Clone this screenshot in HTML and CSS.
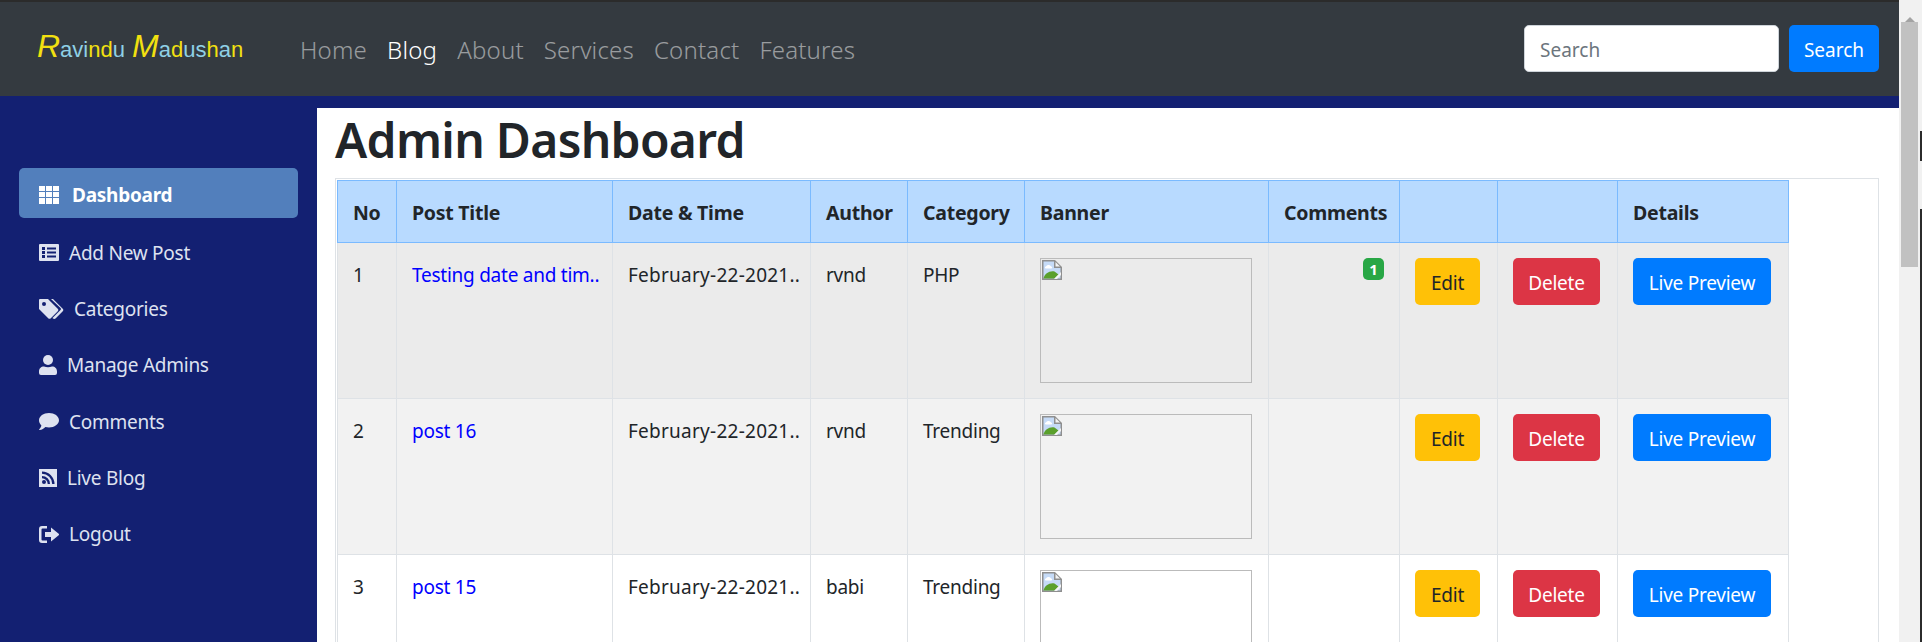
FILE: index.html
```html
<!DOCTYPE html>
<html lang="en">
<head>
    <meta charset="UTF-8">
    <meta name="viewport" content="width=device-width, initial-scale=1.0">
    <title>Admin Dashboard</title>
    <link rel="stylesheet" href="styles.css">
</head>
<body>
<svg class="defs" width="0" height="0">
    <symbol id="ico-broken" viewBox="0 0 20 20">
        <path d="M0 0h13l7 7v13H0z" fill="#8f8f8f"/>
        <path d="M1.500 1.500h10.500v6.500h6.500v10.500H1.500z" fill="#c6dbf7"/>
        <path d="M13.500 2 18 6.500h-4.500z" fill="#f4f4f4"/>
        <path d="M4 6.500c1-2 4-2 5 0 1.500 0 1.500 2 0 2H4c-1.500 0-1.500-2 0-2z" fill="#fff"/>
        <path d="M1.500 18.500c1-5 6-8 11-7l4 3-4 4z" fill="#5aa02c"/>
        <path d="M12 19l7-7v3l-4 4z" fill="#f4f4f4"/>
    </symbol>
</svg>
<div id="window">
    <div id="page">
        <div id="topbar">
            <a class="logo" href="#"><span class="y cap">R</span><span class="b">avi</span><span class="y">nd</span><span class="b">u</span> <span class="y cap">M</span><span class="b">a</span><span class="y">d</span><span class="b">us</span><span class="y">h</span><span class="b">a</span><span class="y">n</span></a>
            <nav class="menu">
                <a href="#">Home</a>
                <a href="#" class="on">Blog</a>
                <a href="#">About</a>
                <a href="#">Services</a>
                <a href="#">Contact</a>
                <a href="#">Features</a>
            </nav>
            <form class="search">
                <input type="text" placeholder="Search">
                <button type="button" class="btn blue">Search</button>
            </form>
        </div>
        <div id="body">
            <div id="side">
                <a href="#" class="side-link active">
                    <svg class="ico" width="20" height="18" viewBox="0 0 20 18"><path d="M0 0h6v5H0zM7 0h6v5H7zM14 0h6v5h-6zM0 6h6v5H0zM7 6h6v5H7zM14 6h6v5h-6zM0 12h6v6H0zM7 12h6v6H7zM14 12h6v6h-6z"/></svg>
                    Dashboard
                </a>
                <a href="#" class="side-link">
                    <svg class="ico" width="20" height="17" viewBox="0 0 20 17"><path fill-rule="evenodd" d="M1 0h18a1 1 0 0 1 1 1v15a1 1 0 0 1-1 1H1a1 1 0 0 1-1-1V1a1 1 0 0 1 1-1zM3 3v3h3V3zM8 3.500v2h9v-2zM3 7v3h3V7zM8 7.500v2h9v-2zM3 11v3h3v-3zM8 11.500v2h9v-2z"/></svg>
                    Add New Post
                </a>
                <a href="#" class="side-link">
                    <svg class="ico" width="25" height="20" viewBox="0 0 25 20"><path fill-rule="evenodd" d="M1 0h8l10 10a2 2 0 0 1 0 2l-7 7a2 2 0 0 1-3 0L0 10V1a1 1 0 0 1 1-1zM5 3a2 2 0 1 0 0 4 2 2 0 0 0 0-4z"/><path d="M12 0h2l10 10a2 2 0 0 1 0 2l-7.500 7.500a2 2 0 0 1-2.500 0l-.5-.5 8-8a1.500 1.500 0 0 0 0-2z"/></svg>
                    Categories
                </a>
                <a href="#" class="side-link">
                    <svg class="ico" width="18" height="20" viewBox="0 0 18 20"><circle cx="9" cy="5" r="5"/><path d="M5 11.500c2.500 1 5.500 1 8 0 3 0 5 2 5 5V18a2 2 0 0 1-2 2H2a2 2 0 0 1-2-2v-1.500c0-3 2-5 5-5z"/></svg>
                    Manage Admins
                </a>
                <a href="#" class="side-link">
                    <svg class="ico" width="20" height="17" viewBox="0 0 20 17"><path d="M10 0c5.500 0 10 3.200 10 7.200s-4.500 7.200-10 7.200c-1.300 0-2.500-.2-3.600-.5C5 15.200 3 17 .5 17c-.5 0-.6-.5-.3-.8 1-1 2-2.300 2.200-3.800C.9 11 0 9.200 0 7.200 0 3.200 4.500 0 10 0z"/></svg>
                    Comments
                </a>
                <a href="#" class="side-link">
                    <svg class="ico" width="18" height="18" viewBox="0 0 18 18"><path fill-rule="evenodd" d="M0 0h18v18H0zM3 2.500v2.300A10.200 10.200 0 0 1 13.200 15h2.300A12.500 12.500 0 0 0 3 2.500zM3 7v2.300A5.700 5.700 0 0 1 8.700 15H11a8 8 0 0 0-8-8zM5 11a2 2 0 1 0 0 4 2 2 0 0 0 0-4z"/></svg>
                    Live Blog
                </a>
                <a href="#" class="side-link">
                    <svg class="ico" width="20" height="17" viewBox="0 0 20 17"><path d="M3 0h5v2.500H3.500a1 1 0 0 0-1 1v10a1 1 0 0 0 1 1H8V17H3a3 3 0 0 1-3-3V3a3 3 0 0 1 3-3z"/><path d="M12 1.500l7.700 6.300a1 1 0 0 1 0 1.400L12 15.500V11H6V6h6z"/></svg>
                    Logout
                </a>
            </div>
            <div id="main">
                <h1>Admin Dashboard</h1>
                <div class="table-box">
                    <table>
                        <colgroup>
                            <col class="c-no"><col class="c-title"><col class="c-date"><col class="c-author"><col class="c-cat">
                            <col class="c-banner"><col class="c-comm"><col class="c-edit"><col class="c-del"><col class="c-live">
                        </colgroup>
                        <thead>
                            <tr>
                                <th>No</th>
                                <th>Post Title</th>
                                <th>Date &amp; Time</th>
                                <th>Author</th>
                                <th>Category</th>
                                <th>Banner</th>
                                <th>Comments</th>
                                <th></th>
                                <th></th>
                                <th>Details</th>
                            </tr>
                        </thead>
                        <tbody>
                            <tr class="hover">
                                <td>1</td>
                                <td><a href="#">Testing date and tim..</a></td>
                                <td class="date">February-22-2021..</td>
                                <td>rvnd</td>
                                <td>PHP</td>
                                <td><span class="banner"><svg width="20" height="20"><use href="#ico-broken"/></svg></span></td>
                                <td><span class="badge">1</span></td>
                                <td><a href="#" class="btn yellow">Edit</a></td>
                                <td><a href="#" class="btn red">Delete</a></td>
                                <td><a href="#" class="btn blue">Live Preview</a></td>
                            </tr>
                            <tr class="odd">
                                <td>2</td>
                                <td><a href="#">post 16</a></td>
                                <td class="date">February-22-2021..</td>
                                <td>rvnd</td>
                                <td>Trending</td>
                                <td><span class="banner"><svg width="20" height="20"><use href="#ico-broken"/></svg></span></td>
                                <td></td>
                                <td><a href="#" class="btn yellow">Edit</a></td>
                                <td><a href="#" class="btn red">Delete</a></td>
                                <td><a href="#" class="btn blue">Live Preview</a></td>
                            </tr>
                            <tr>
                                <td>3</td>
                                <td><a href="#">post 15</a></td>
                                <td class="date">February-22-2021..</td>
                                <td>babi</td>
                                <td>Trending</td>
                                <td><span class="banner"><svg width="20" height="20"><use href="#ico-broken"/></svg></span></td>
                                <td></td>
                                <td><a href="#" class="btn yellow">Edit</a></td>
                                <td><a href="#" class="btn red">Delete</a></td>
                                <td><a href="#" class="btn blue">Live Preview</a></td>
                            </tr>
                        </tbody>
                    </table>
                </div>
            </div>
        </div>
    </div>
    <div id="scroll">
        <div class="arrow"></div>
        <div class="thumb"></div>
        <div class="edge edge-a"></div>
        <div class="edge edge-b"></div>
    </div>
</div>
</body>
</html>
```
FILE: styles.css
```css
*{
    box-sizing: border-box;
}
html, body{
    margin: 0;
    height: 100%;
    overflow: hidden;
}
body{
    font-family: "Noto Sans", "Open Sans", sans-serif;
    font-size: 19px;
    letter-spacing: -.25px;
    color: #212529;
}
.defs{
    position: absolute;
}
#window{
    display: flex;
    height: 642px;
    overflow: hidden;
}
#page{
    flex: 1;
    min-width: 0;
    display: flex;
    flex-direction: column;
    background-color: #132072;
}

/* top bar */
#topbar{
    flex: none;
    height: 96px;
    display: flex;
    align-items: center;
    padding: 2px 20px 4px 37px;
    background-color: #343a40;
    border-top: 2px solid #2b2b2b;
}
.logo{
    flex: none;
    width: 263px;
    padding-bottom: 4px;
    font-family: "Liberation Sans Narrow", "Liberation Sans", sans-serif;
    font-size: 22px;
    letter-spacing: 0;
    word-spacing: 1px;
    text-decoration: none;
    white-space: nowrap;
}
.logo .y{
    color: #f2e010;
}
.logo .b{
    color: #8fd0e6;
}
.logo .cap{
    font-size: 32px;
    font-style: italic;
}
.menu{
    display: flex;
    gap: 20px;
    padding-top: 2px;
    font-size: 24px;
    font-weight: 300;
    letter-spacing: .2px;
}
.menu a{
    color: rgba(255,255,255,.5);
    text-decoration: none;
}
.menu a.on{
    color: #fff;
}
.search{
    display: flex;
    gap: 10px;
    margin-left: auto;
}
.search input{
    width: 255px;
    height: 47px;
    padding: 4px 15px 0;
    font: inherit;
    color: #495057;
    background: #fff;
    border: 1px solid #ced4da;
    border-radius: 5px;
}
.search input::placeholder{
    color: #6c757d;
}
.search .btn{
    width: 90px;
}

/* buttons */
.btn{
    display: block;
    height: 47px;
    padding: 4px 0 0;
    font: inherit;
    line-height: 43px;
    text-align: center;
    text-decoration: none;
    border: 0;
    border-radius: 5px;
}
.blue{
    color: #fff;
    background-color: #007bff;
}
.yellow{
    color: #212529;
    background-color: #ffc107;
}
.red{
    color: #fff;
    background-color: #dc3545;
}

/* side menu */
#body{
    flex: 1;
    display: flex;
    min-height: 0;
}
#side{
    flex: none;
    width: 317px;
    padding: 72px 19px 0;
}
.side-link{
    display: flex;
    align-items: center;
    gap: 10px;
    height: 50px;
    margin-bottom: 6.250px;
    padding: 7px 20px 0;
    color: #dee2f0;
    text-decoration: none;
    border-radius: 5px;
}
.side-link .ico{
    flex: none;
    fill: currentColor;
}
.side-link.active{
    gap: 13px;
    padding-top: 4px;
    font-weight: 700;
    color: #fff;
    background-color: #527fbc;
}

/* main */
#main{
    flex: 1;
    min-width: 0;
    margin-top: 12px;
    padding: 0 20px 0 18px;
    background-color: #fff;
}
h1{
    margin: 0;
    height: 70px;
    font-size: 48px;
    font-weight: 600;
    line-height: 64px;
    letter-spacing: -.7px;
}
.table-box{
    height: 600px;
    padding: 1px;
    border: 1px solid #dee2e6;
}
table{
    table-layout: fixed;
    width: 1452px;
    border-collapse: collapse;
}
.c-no{ width: 59px; }
.c-title{ width: 216px; }
.c-date{ width: 198px; }
.c-author{ width: 97px; }
.c-cat{ width: 117px; }
.c-banner{ width: 244px; }
.c-comm{ width: 131px; }
.c-edit{ width: 98px; }
.c-del{ width: 120px; }
.c-live{ width: 171px; }
th, td{
    padding: 15px;
    vertical-align: top;
    white-space: nowrap;
    overflow: hidden;
    border: 1px solid #dee2e6;
}
td{
    line-height: 34px;
}
td.date{
    letter-spacing: .25px;
}
th{
    height: 62px;
    padding-top: 19px;
    font-size: 19.500px;
    font-weight: 700;
    line-height: 26px;
    text-align: left;
    background-color: #b8daff;
    border-color: #7abaff;
}
tbody tr{
    height: 156px;
}
tr.hover td{
    background-color: #ebebeb;
}
tr.odd td{
    background-color: #f2f2f2;
}
td a{
    color: #0000ff;
    text-decoration: none;
}
td .btn{
    margin-right: 2px;
}
td a.btn.blue, td a.btn.red{
    color: #fff;
}
td a.btn.yellow{
    color: #212529;
}
.banner{
    display: block;
    width: 212px;
    height: 125px;
    padding: 1px;
    border: 1px solid #bbb;
}
.banner svg{
    display: block;
}
.badge{
    float: right;
    width: 21px;
    height: 22px;
    font-size: 15px;
    font-weight: 700;
    line-height: 22px;
    text-align: center;
    color: #fff;
    background-color: #28a745;
    border-radius: 5px;
}

/* browser scrollbar */
#scroll{
    flex: none;
    position: relative;
    width: 23px;
    padding: 0 4px 0 2px;
    background-color: #f1f1f1;
}
.arrow{
    width: 0;
    height: 22px;
    margin: 0 auto;
    border-left: 5px solid transparent;
    border-right: 5px solid transparent;
    border-bottom: 5px solid #a3a3a3;
    border-top: 10px solid transparent;
}
.thumb{
    height: 245px;
    background-color: #c1c1c1;
}
.edge{
    position: absolute;
    right: 0;
    width: 2px;
    background-color: #2b2b2b;
}
.edge-a{
    top: 131px;
    height: 30px;
}
.edge-b{
    top: 209px;
    bottom: 0;
}
```
